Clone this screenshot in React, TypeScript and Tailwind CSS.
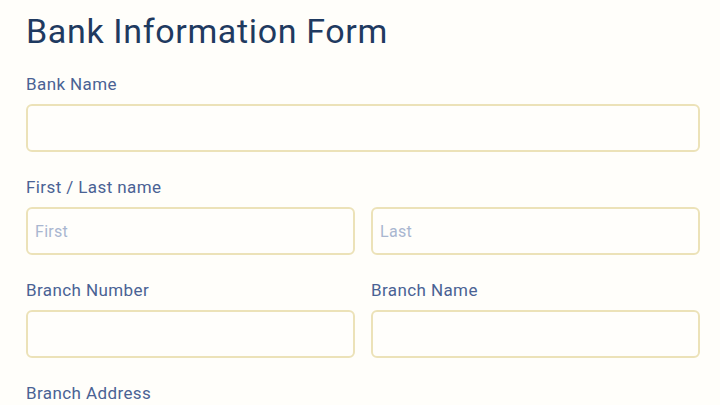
import React from 'react';

const labelCls = "block text-[17px] leading-6 tracking-[0.4px] text-[#4a6294] mb-[8px]";
const inputCls =
  "w-full h-[48px] rounded-[6px] border-2 border-[#ece2b8] bg-[#fffefb] px-[7px] text-[16px] tracking-[0.3px] text-[#33466e] placeholder:text-[#a9b6d0] outline-none";

function Field({ label, children }: { label: string; children: React.ReactNode }) {
  return (
    <div className="mb-[23px]">
      <label className={labelCls}>{label}</label>
      {children}
    </div>
  );
}

export default function App() {
  return (
    <div
      className="w-[720px] h-[405px] overflow-hidden bg-[#fffefa] pl-[26px] pr-[20px] pt-[11px]"
      style={{ fontFamily: 'Roboto, "Noto Sans", sans-serif' }}
    >
      <h1 className="text-[34px] leading-[40px] tracking-[0.65px] text-[#1f3a60] mb-[21px]">Bank Information Form</h1>

      <Field label="Bank Name">
        <input className={inputCls} />
      </Field>

      <Field label="First / Last name">
        <div className="grid grid-cols-2 gap-[16px]">
          <input className={inputCls} placeholder="First" />
          <input className={inputCls} placeholder="Last" />
        </div>
      </Field>

      <div className="grid grid-cols-2 gap-[16px] mb-[23px]">
        <div>
          <label className={labelCls}>Branch Number</label>
          <input className={inputCls} />
        </div>
        <div>
          <label className={labelCls}>Branch Name</label>
          <input className={inputCls} />
        </div>
      </div>

      <Field label="Branch Address">
        <input className={inputCls} />
      </Field>
    </div>
  );
}
